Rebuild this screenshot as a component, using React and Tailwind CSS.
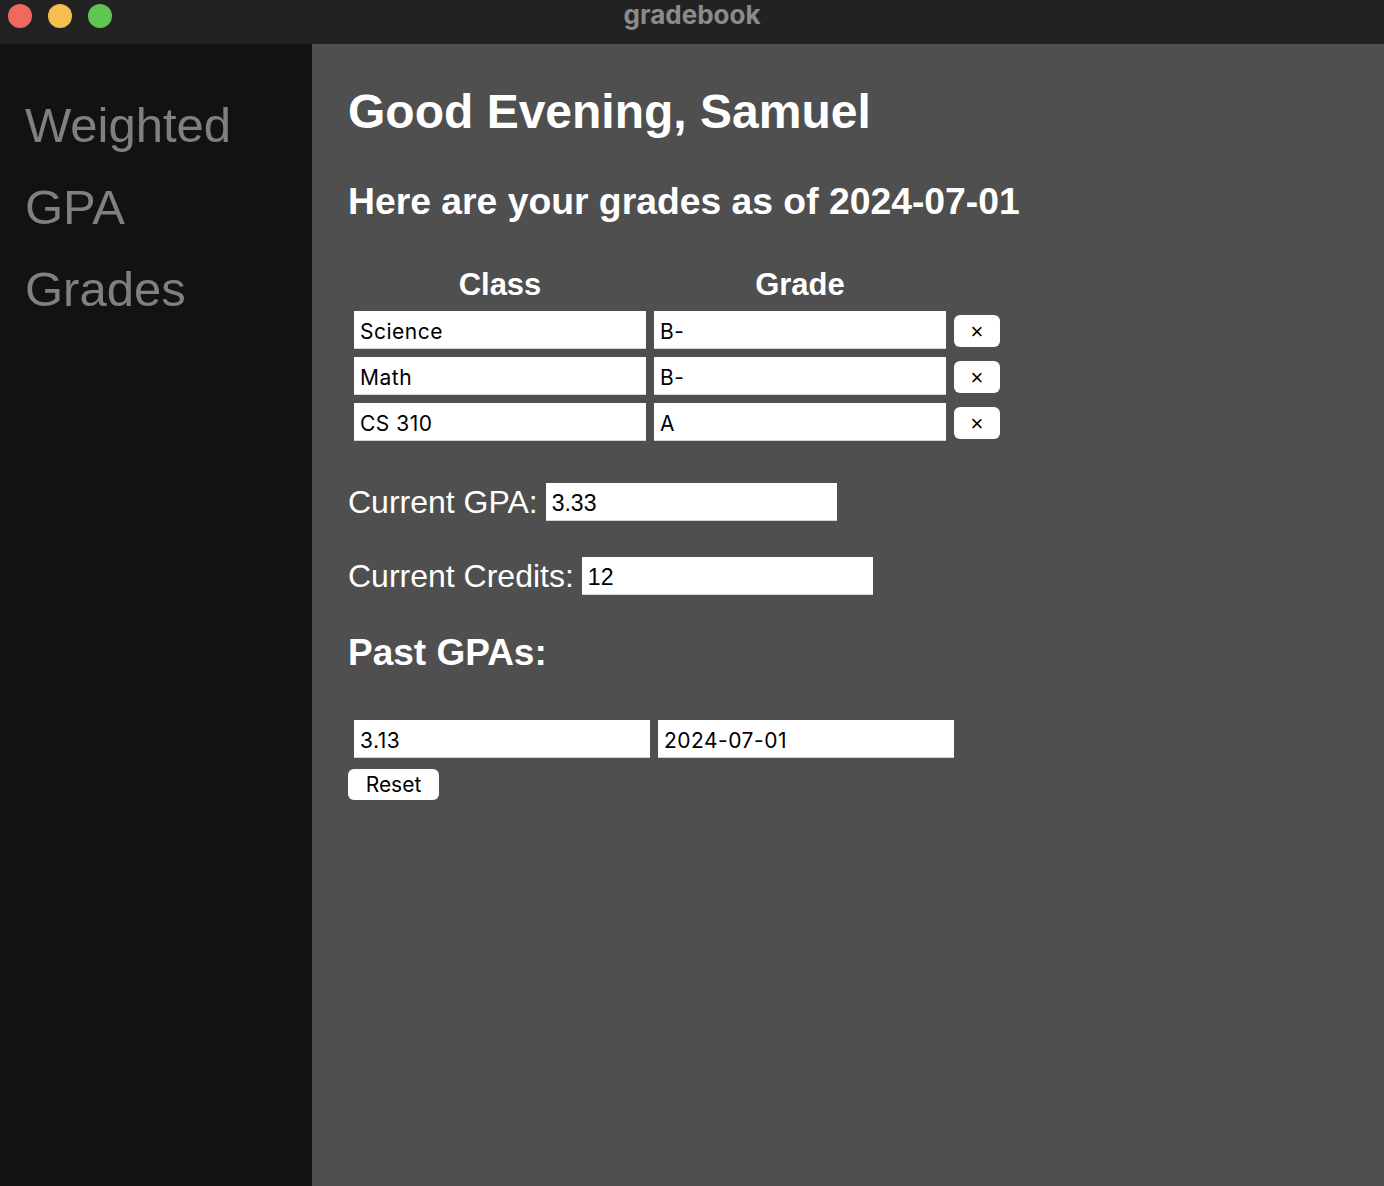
import React from "react";

const sans = { fontFamily: '"Liberation Sans", Arial, sans-serif' };
const ui = { fontFamily: 'Inter, "Noto Sans", sans-serif' };

function Field({ value, w = "w-[292px]", cls = "" }) {
  return (
    <input
      defaultValue={value}
      style={ui}
      className={`${w} h-[38px] bg-white text-black text-[21px] tracking-[0.5px] pl-[6px] pt-[4px] border-0 border-b border-[#d4d4d4] outline-none ${cls}`}
    />
  );
}

function XButton() {
  return (
    <button
      style={sans}
      className="w-[46px] h-[32px] mt-[4px] bg-white rounded-[6px] text-black text-[22px] leading-none flex items-center justify-center pt-[2px]"
    >
      ×
    </button>
  );
}

export default function App() {
  const rows = [
    ["Science", "B-"],
    ["Math", "B-"],
    ["CS 310", "A"],
  ];
  return (
    <div className="w-[1384px] h-[1186px] flex flex-col bg-[#4f4f4f] overflow-hidden">
      <div className="h-[44px] bg-[#222222] flex items-center relative shrink-0">
        <div className="flex items-center gap-[16px] pl-[8px] -mt-[12px]">
          <div className="w-[24px] h-[24px] rounded-full bg-[#ee6a5f]" />
          <div className="w-[24px] h-[24px] rounded-full bg-[#f5be4f]" />
          <div className="w-[24px] h-[24px] rounded-full bg-[#61c554]" />
        </div>
        <div
          style={ui}
          className="absolute left-0 right-0 top-0 text-center text-[26px] font-bold text-[#8b8b8b] leading-[30px] pointer-events-none"
        >
          gradebook
        </div>
      </div>
      <div className="flex flex-1">
        <div style={sans} className="w-[312px] bg-[#121212] pt-[40px] pl-[25px] text-[49px] text-[#808080] flex flex-col">
          <div className="leading-[82px]">Weighted</div>
          <div className="leading-[82px]">GPA</div>
          <div className="leading-[82px]">Grades</div>
        </div>
        <div style={sans} className="flex-1 pl-[36px] pt-[40px] flex flex-col items-start text-white">
          <h1 className="text-[48px] leading-[56px] font-bold">Good Evening, Samuel</h1>
          <h2 className="mt-[40px] text-[37.3px] leading-[42px] font-bold">Here are your grades as of 2024-07-01</h2>
          <div className="mt-[44px] ml-[6px] grid grid-cols-[292px_292px_46px] gap-x-[8px] gap-y-[8px] items-start">
            <div className="text-center text-[31px] leading-[37px] font-bold">Class</div>
            <div className="text-center text-[31px] leading-[37px] font-bold">Grade</div>
            <div />
            {rows.map(([c, g]) => (
              <React.Fragment key={c}>
                <Field value={c} />
                <Field value={g} />
                <XButton />
              </React.Fragment>
            ))}
          </div>
          <div className="mt-[42px] flex items-center gap-[8px]">
            <span className="text-[32px] leading-[38px]">Current GPA:</span>
            <input
              defaultValue="3.33"
              style={sans}
              className="w-[291px] h-[38px] bg-white text-black text-[23px] pl-[6px] pt-[4px] border-0 border-b border-[#d4d4d4] outline-none"
            />
          </div>
          <div className="mt-[36px] flex items-center gap-[8px]">
            <span className="text-[32px] leading-[38px]">Current Credits:</span>
            <input
              defaultValue="12"
              style={sans}
              className="w-[291px] h-[38px] bg-white text-black text-[23px] pl-[6px] pt-[4px] border-0 border-b border-[#d4d4d4] outline-none"
            />
          </div>
          <h2 className="mt-[37px] text-[37px] leading-[42px] font-bold">Past GPAs:</h2>
          <div className="mt-[46px] ml-[6px] flex gap-[8px]">
            <Field value="3.13" w="w-[296px]" />
            <Field value="2024-07-01" w="w-[296px]" />
          </div>
          <button
            style={ui}
            className="mt-[11px] w-[91px] h-[31px] bg-white rounded-[6px] text-black text-[21px] leading-none flex items-center justify-center"
          >
            Reset
          </button>
        </div>
      </div>
    </div>
  );
}
